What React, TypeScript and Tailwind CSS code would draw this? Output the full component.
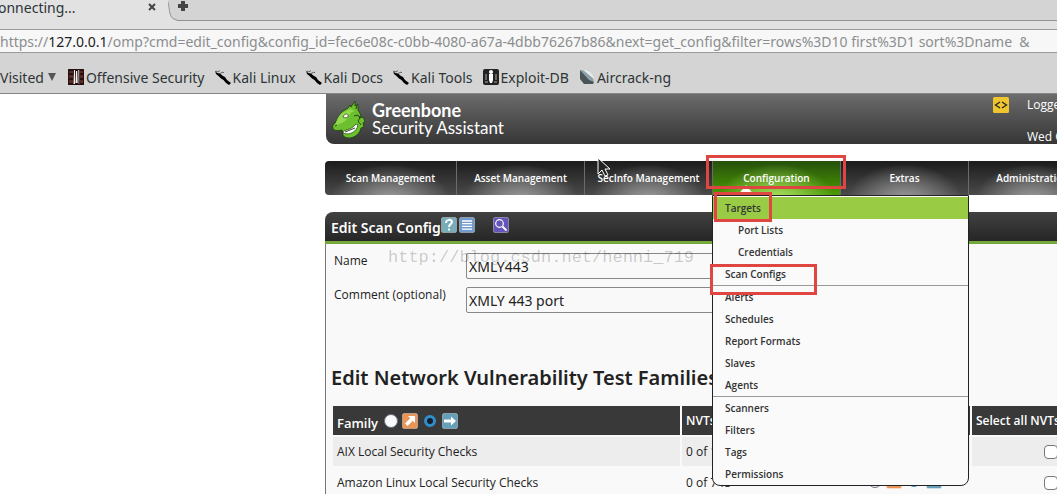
import type { ReactNode } from "react";

const bookmarks = [
  { label: "Offensive Security", icon: "offsec" },
  { label: "Kali Linux", icon: "kali" },
  { label: "Kali Docs", icon: "kali" },
  { label: "Kali Tools", icon: "kali" },
  { label: "Exploit-DB", icon: "exploit" },
  { label: "Aircrack-ng", icon: "aircrack" },
];

const menuGroups = [
  [
    { label: "Targets", active: true },
    { label: "Port Lists", nested: true },
    { label: "Credentials", nested: true },
    { label: "Scan Configs" },
  ],
  [
    { label: "Alerts" },
    { label: "Schedules" },
    { label: "Report Formats" },
    { label: "Slaves" },
    { label: "Agents" },
  ],
  [{ label: "Scanners" }, { label: "Filters" }, { label: "Tags" }, { label: "Permissions" }],
];

const families = [
  { name: "AIX Local Security Checks", count: "0 of 1" },
  { name: "Amazon Linux Local Security Checks", count: "0 of 748" },
];

function BookmarkIcon({ type }: { type: string }) {
  if (type === "offsec") {
    return (
      <svg viewBox="0 0 16 16" className="size-4 shrink-0">
        <path fill="#241010" d="M0 0h16v16H0z" />
        <path fill="#5c2a26" d="M1 2h4v2H1zM1 6h4v3H1zM1 11h4v3H1zM12 2h3v2h-3zM12 6h3v3h-3zM12 11h3v3h-3z" />
        <path fill="#f4eeee" d="M6 1h1v14H5.500zM8 2h1.200l.5 12H7.500zM10.300 1h.9v14h-.5z" />
      </svg>
    );
  }
  if (type === "kali") {
    return (
      <svg viewBox="0 0 16 16" className="size-4 shrink-0">
        <path d="M0 1.500 2 4l3 .5 3 2.500 2 1 2 3 4 3-2 2-3-2-2.500-3L6 9.500 3.500 7 1 5z" />
        <path fill="none" stroke="#444" strokeWidth=".8" d="m3 3 2-1.500M5 4.500 8 3l1 1M1 2l2 1" />
      </svg>
    );
  }
  if (type === "exploit") {
    return (
      <svg viewBox="0 0 16 16" className="size-4 shrink-0">
        <rect width="16" height="16" rx="2" fill="#222" />
        <circle cx="8" cy="3" r="2" fill="#fff" />
        <path fill="#fff" d="M6 5h4v6l-1 3H7l-1-3z" />
        <path fill="none" stroke="#aaa" d="M3 5v6M13 5v6M2 13h3M11 13h3" />
      </svg>
    );
  }
  return (
    <svg viewBox="0 0 16 16" className="size-4 shrink-0">
      <path fill="#4b5456" d="M1 1v9l4 5h9l1-2z" />
      <path fill="#8ea0a8" d="M1 1c8 0 13 5 14 12l-5-2z" />
      <path fill="#e6ecee" d="M4 1c6 0 10 4 11 9z" />
    </svg>
  );
}

function Dragon() {
  return (
    <svg viewBox="0 0 36 38" className="h-[38px] w-9 shrink-0">
      <path
        fill="#6cc02f"
        stroke="#1c3d0c"
        strokeWidth=".8"
        d="M1 29c-1-3 0-5 2-6 3-4 4-9 8-12l5-3 2-3 1 2 4-6 0 5 3-2v6l3 5-2 3 4-1 2 4-2 2 1 4-3 1c-1 5-5 9-11 10-5 0-8-2-7-5l-1-3c-4 1-7 1-9-1z"
      />
      <path fill="#93d94e" d="M3 26c2-7 4-12 9-14l6-3 5 2c-5 1-6 4-8 8-3 4-7 4-12 7z" />
      <path fill="#fff" stroke="#1c3d0c" strokeWidth=".7" d="M11 17c1-3 4-4 5-2s-2 4-5 2zM11 33c0-4 8-2 13-9l2 1c-1 6-8 11-15 8z" />
      <path fill="none" stroke="#1c3d0c" strokeWidth=".9" d="m13 32 10-4M22 16l4-1 2 3-2 3 3 4M3 26l2-1M24 9l1-4" />
    </svg>
  );
}

function ToolIcon({ type }: { type: "help" | "list" | "search" | "trend" | "arrow" }) {
  const fills = { help: "#78acb8", list: "#719bca", search: "#6655b9", trend: "#e99558", arrow: "#64a1b8" };
  return (
    <svg viewBox="0 0 16 16" className="size-4 shrink-0" fill="none" stroke="#fff" strokeWidth="2">
      <rect x=".5" y=".5" width="15" height="15" rx="1.5" fill={fills[type]} stroke="#fff" strokeOpacity=".35" strokeWidth="1" />
      {type === "help" && <path d="M5 6c0-4 6-4 6-1 0 2-3 2-3 5M8 11.500v2" />}
      {type === "list" && <path strokeWidth="1.300" d="M3 4h10M3 6.700h10M3 9.400h10M3 12.100h10" />}
      {type === "search" && (
        <>
          <circle cx="6.500" cy="6.500" r="3.800" strokeWidth="1.200" />
          <path strokeWidth="1.800" d="m9.500 9.500 4 4" />
        </>
      )}
      {type === "trend" && <path fill="#fff" stroke="none" d="M6 3h7v7l-2.300-2.300L5.500 13 3 10.500l5.300-5.200z" />}
      {type === "arrow" && <path fill="#fff" stroke="none" d="M2 6.500h7V3.500L14 8l-5 4.500v-3H2z" />}
    </svg>
  );
}

function TrendChoice({ name }: { name: string }) {
  return (
    <span className="inline-flex items-center">
      <input
        type="radio"
        name={name}
        aria-label="Grow"
        className="mr-1 size-3.5 appearance-none rounded-full border border-gray-500 bg-gray-50"
      />
      <ToolIcon type="trend" />
      <input
        type="radio"
        name={name}
        defaultChecked
        aria-label="Static"
        className="mx-1.5 size-3 appearance-none rounded-full border-[3px] border-[#2f8fcc] bg-[#15202b]"
      />
      <ToolIcon type="arrow" />
    </span>
  );
}

function BrowserChrome() {
  return (
    <header className="border-b border-[#858585] bg-[#d4d4d4] font-['Noto_Sans','Open_Sans',sans-serif] text-[14px] text-[#2e3436]">
      <div className="flex h-[21px]">
        <div className="relative z-10 -mb-px flex w-[168px] items-center justify-between bg-[#e2e2e2] pb-2">
          <span className="-ml-0.5">onnecting...</span>
          <button type="button" aria-label="Close tab" className="mr-3">
            <svg viewBox="0 0 8 8" className="size-2" stroke="#444" strokeWidth="2">
              <path d="m1 1 6 6M7 1 1 7" />
            </svg>
          </button>
        </div>
        <div className="flex flex-1 border-b border-[#929292]">
          <svg viewBox="0 0 10 21" className="h-[21px] w-2.5 shrink-0" fill="#e2e2e2">
            <path d="M0 0c2 3 0 16 6 19l4 2H0z" />
            <path fill="none" stroke="#929292" d="M-1 0c3 4 1 17 7 19l4 1.500" />
          </svg>
          <button type="button" aria-label="New tab" className="mb-2">
            <svg viewBox="0 0 10 10" className="size-2.5" fill="#444">
              <path d="M3 0h4v3h3v4H7v3H3V7H0V3h3z" />
            </svg>
          </button>
        </div>
      </div>
      <div className="bg-[#e2e2e2] pt-2">
        <div className="flex h-6 items-center overflow-hidden border-y border-[#9a9a9a] bg-[#f7f7f7] whitespace-pre text-[#8b8e8f]">
          https://<span className="text-[#222]">127.0.0.1</span>
          {"/omp?cmd=edit_config&config_id=fec6e08c-c0bb-4080-a67a-4dbb76267b86&next=get_config&filter=rows%3D10 first%3D1 sort%3Dname  &"}
        </div>
      </div>
      <nav aria-label="Bookmarks" className="flex h-10 items-center gap-2.5 pt-2 whitespace-nowrap">
        <button type="button" className="mr-0.5 flex items-center gap-1">
          Visited
          <svg viewBox="0 0 8 8" className="size-2" fill="#555">
            <path d="M0 0h8L4 8z" />
          </svg>
        </button>
        {bookmarks.map((b) => (
          <a key={b.label} href="#" className="flex items-center gap-0.5">
            <BookmarkIcon type={b.icon} />
            {b.label}
          </a>
        ))}
      </nav>
    </header>
  );
}

function Mark({ className }: { className: string }) {
  return <span className={`pointer-events-none absolute z-30 border-[3px] border-[#df4641] ${className}`} />;
}

function ConfigurationMenu() {
  return (
    <div className="absolute top-[34px] -left-px z-20 w-[257px] rounded-b-lg border border-[#222] bg-[#fafafa] pt-px text-[#333]">
      {menuGroups.map((group, i) => (
        <ul key={i} className={i > 0 ? "border-t border-[#999]" : ""}>
          {group.map((item) => (
            <li key={item.label}>
              <a
                href="#"
                className={`block h-[22px] leading-[22px] ${"active" in item ? "bg-[#99cc44]" : ""} ${"nested" in item ? "pl-[25px]" : "pl-3"}`}
              >
                {item.label}
              </a>
            </li>
          ))}
        </ul>
      ))}
      <Mark className="-top-1 left-px h-[30px] w-[58px]" />
      <Mark className="top-[68px] -left-[3px] h-[31px] w-[107px]" />
    </div>
  );
}

function NavItem({ label, active, children }: { label: string; active?: boolean; children?: ReactNode }) {
  return (
    <li
      className={`relative w-32 shrink-0 border-l border-[#6a6a6a] first:w-[131px] first:rounded-l-sm first:border-l-0 ${
        active
          ? "bg-[radial-gradient(ellipse_at_50%_120%,#b4e86a_0%,transparent_65%),linear-gradient(#26500c,#4b9a04)]"
          : "bg-[radial-gradient(ellipse_at_50%_120%,#a0a0a0_0%,transparent_65%),linear-gradient(#1c1c1c,#4a4a4a)]"
      }`}
    >
      <a href="#" className="block h-[34px] text-center leading-[34px] text-white">
        {label}
      </a>
      {children}
    </li>
  );
}

function MainNav() {
  return (
    <ul className="mt-[17px] flex text-[10px] font-semibold whitespace-nowrap">
      <NavItem label="Scan Management" />
      <NavItem label="Asset Management" />
      <NavItem label="SecInfo Management" />
      <NavItem label="Configuration" active>
        <svg viewBox="0 0 16 10" className="absolute bottom-0 left-[25px] h-2.5 w-4" fill="#fff">
          <path d="m8 0 8 10H0z" />
        </svg>
        <ConfigurationMenu />
        <Mark className="-top-1.5 -left-[7px] h-[34px] w-[140px]" />
      </NavItem>
      <NavItem label="Extras" />
      <NavItem label="Administration" />
    </ul>
  );
}

function FamilyTable() {
  return (
    <table className="-mx-0.5 w-[880px] table-fixed border-separate border-spacing-0.5 text-left">
      <thead className="h-[29px] bg-[#393939] text-white">
        <tr>
          <th className="w-[347px] px-1 font-semibold">
            <span className="flex items-center gap-1.5">
              <span className="pt-1.5 text-[13px]">Family</span>
              <TrendChoice name="all" />
            </span>
          </th>
          <th className="w-[120px] px-1 font-semibold">NVTs selected</th>
          <th className="w-[166px] px-1 font-semibold">Trend</th>
          <th className="px-1 font-semibold">Select all NVTs</th>
        </tr>
      </thead>
      <tbody>
        {families.map((f) => (
          <tr key={f.name} className="h-[29px] odd:bg-[#ededed]">
            <td className="px-1">{f.name}</td>
            <td className="px-1">{f.count}</td>
            <td className="pl-16">
              <TrendChoice name={f.name} />
            </td>
            <td className="pl-[72px]">
              <input type="checkbox" aria-label={`Select all NVTs of ${f.name}`} className="block size-3.5 appearance-none rounded-sm border border-[#777] bg-white" />
            </td>
          </tr>
        ))}
      </tbody>
    </table>
  );
}

export default function App() {
  return (
    <div className="min-h-screen overflow-hidden bg-white">
      <BrowserChrome />
      <div className="relative ml-[325px] font-['Open_Sans','Noto_Sans',sans-serif] text-[12px] text-[#222]">
        <div className="ml-px flex h-[50px] justify-between overflow-hidden rounded-bl-lg bg-linear-to-b from-[#6c6c6c] to-[#363636] text-white">
          <div className="flex items-center gap-1 pl-1.5">
            <Dragon />
            <div className="font-['Lato',sans-serif] text-[17px] leading-[17px]">
              <p className="text-[18px] font-bold">Greenbone</p>
              <p>Security Assistant</p>
            </div>
          </div>
          <div className="flex w-16 items-start gap-[18px] pt-[3px] whitespace-nowrap">
            <svg viewBox="0 0 16 16" className="size-4 shrink-0" fill="none" stroke="#222" strokeWidth="1.300">
              <rect width="16" height="16" rx="1.500" fill="#efc52f" stroke="none" />
              <path d="M7 5 2.500 8 7 11M9 5l4.500 3L9 11" />
            </svg>
            <div className="leading-4">
              <p>Logged in as</p>
              <p className="mt-4">Wed Oct</p>
            </div>
          </div>
        </div>
        <MainNav />
        <h1 className="mt-[17px] flex h-8 items-center rounded-tl-lg border-b-[3px] border-[#74a83a] bg-linear-to-b from-[#424242] to-[#262626] pl-1.5 font-['Noto_Sans',sans-serif] text-[14px] font-semibold text-white">
          <span className="pt-0.5">Edit Scan Config</span>
          <a href="#" aria-label="Help" className="mb-1">
            <ToolIcon type="help" />
          </a>
          <a href="#" aria-label="List" className="mb-1 ml-0.5">
            <ToolIcon type="list" />
          </a>
          <a href="#" aria-label="Details" className="mb-1 ml-[18px]">
            <ToolIcon type="search" />
          </a>
        </h1>
        <main className="border-l border-[#777] bg-[#f9f9f9] pl-[7px]">
          <form className="flex flex-col gap-2 pt-[9px]">
            {[
              ["name", "Name", "XMLY443"],
              ["comment", "Comment (optional)", "XMLY 443 port"],
            ].map(([id, label, value]) => (
              <div key={id} className="flex pl-px">
                <label htmlFor={id} className="w-[132px] leading-4">
                  {label}
                </label>
                <input
                  id={id}
                  defaultValue={value}
                  className="h-[26px] w-[350px] rounded-xs border border-[#888] bg-transparent px-0.5 font-['Noto_Sans',sans-serif] text-[14px]"
                />
              </div>
            ))}
          </form>
          <h2 className="mt-[51px] mb-3 -ml-0.5 font-['Noto_Sans',sans-serif] text-[20px] leading-7 font-semibold whitespace-nowrap">
            Edit Network Vulnerability Test Families
          </h2>
          <FamilyTable />
        </main>
        <p className="pointer-events-none absolute top-[154px] left-[63px] z-10 font-['Liberation_Mono',monospace] text-[17px] leading-5 text-black/20">
          http://blog.csdn.net/henni_719
        </p>
        <svg viewBox="0 0 14 20" className="absolute top-[63px] left-[272px] z-10 h-5 w-3.5" fill="#222" stroke="#fff">
          <path d="M1 1v16l4-4 3 6 3-1-3-6h5z" />
        </svg>
      </div>
    </div>
  );
}
